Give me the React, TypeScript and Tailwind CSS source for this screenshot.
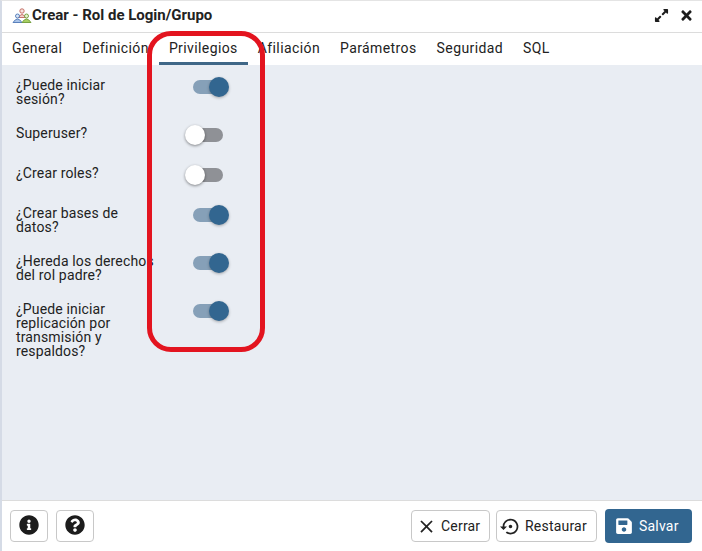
import { FaExpandAlt, FaTimes, FaInfoCircle, FaQuestionCircle, FaSave } from "react-icons/fa";
import { MdClose, MdSettingsBackupRestore } from "react-icons/md";

const tabs = ["General", "Definición", "Privilegios", "Afiliación", "Parámetros", "Seguridad", "SQL"];

const rows = [
  { label: "¿Puede iniciar sesión?", on: true },
  { label: "Superuser?", on: false },
  { label: "¿Crear roles?", on: false },
  { label: "¿Crear bases de datos?", on: true },
  { label: "¿Hereda los derechos del rol padre?", on: true },
  { label: "¿Puede iniciar replicación por transmisión y respaldos?", on: true },
];

const Toggle = ({ on }: { on: boolean }) => (
  <div className={`relative mt-[3px] h-[14px] w-[30px] rounded-full ${on ? "bg-[#86a0b8]" : "bg-[#8f9196]"}`}>
    {on ? (
      <div className="absolute right-[-6px] top-[-3px] h-5 w-5 rounded-full bg-[#326690] shadow-[0_1px_3px_rgba(0,0,0,0.3)]" />
    ) : (
      <div className="absolute left-[-8px] top-[-3px] h-5 w-5 rounded-full bg-white shadow-[0_1px_3px_rgba(0,0,0,0.45)]" />
    )}
  </div>
);

const Logo = () => (
  <svg width="20" height="16" viewBox="0 0 20 16">
    <circle cx="10" cy="3" r="2.2" fill="#f6e3df" stroke="#c0645a" strokeWidth="0.9" />
    <path d="M6.5 9.5 Q10 3.5 13.5 9.5 Z" fill="#f3d2cc" stroke="#c0645a" strokeWidth="0.9" />
    <circle cx="5.5" cy="8" r="2" fill="#dbe6f5" stroke="#4c76b5" strokeWidth="0.9" />
    <path d="M1 14.5 Q5.5 7.5 10 14.5 Z" fill="#a9c3e8" stroke="#4c76b5" strokeWidth="0.9" />
    <circle cx="14.5" cy="8" r="2" fill="#e6f2cf" stroke="#6d9a35" strokeWidth="0.9" />
    <path d="M10 14.5 Q14.5 7.5 19 14.5 Z" fill="#a8cf62" stroke="#6d9a35" strokeWidth="0.9" />
  </svg>
);

const App = () => {
  return (
    <div className="relative flex h-[551px] w-[702px] flex-col overflow-hidden border-l-2 border-t border-l-[#d5dbe6] border-t-[#e4e4e4] bg-white font-['Roboto',sans-serif] text-sm text-[#222222]">
      {/* Header */}
      <header className="flex h-8 shrink-0 items-center border-b border-[#dcdcdc] pb-[2px] pl-[10px] pr-[8px]">
        <Logo />
        <span className="text-[15px] font-bold">Crear - Rol de Login/Grupo</span>
        <div className="ml-auto flex items-center gap-[10px] text-[#1c1c1c]">
          <FaExpandAlt className="h-[15px] w-[15px]" />
          <FaTimes className="h-[15px] w-[15px]" />
        </div>
      </header>

      {/* Tabs */}
      <nav className="flex h-8 shrink-0 items-stretch bg-white">
        {tabs.map((tab) => (
          <div
            key={tab}
            className={`flex items-center border-b-[3px] px-[10px] tracking-[0.4px] ${
              tab === "Privilegios" ? "border-[#3f6787]" : "border-transparent"
            }`}
          >
            {tab}
          </div>
        ))}
      </nav>

      {/* Form */}
      <main className="flex flex-1 flex-col gap-5 bg-[#e9edf3] pl-[14px] pt-3">
        {rows.map((row) => (
          <div key={row.label} className="flex min-h-5">
            <div className="w-[177px] shrink-0">
              <p className="mb-[-1px] w-[140px] pt-px leading-[14px] tracking-[0.15px]">{row.label}</p>
            </div>
            <Toggle on={row.on} />
          </div>
        ))}
      </main>

      {/* Footer */}
      <footer className="flex h-[51px] shrink-0 items-center border-t border-[#dcdcdc] bg-white pl-2 pr-[10px]">
        <button className="flex h-8 w-[38px] items-center justify-center rounded border border-[#c8c8c8] pb-[2px]">
          <FaInfoCircle className="h-5 w-5 text-[#1c1c1c]" />
        </button>
        <button className="ml-2 flex h-8 w-[38px] items-center justify-center rounded border border-[#c8c8c8] pb-[2px]">
          <FaQuestionCircle className="h-5 w-5 text-[#1c1c1c]" />
        </button>
        <button className="ml-auto flex h-8 w-[79px] items-center gap-1 rounded border border-[#c8c8c8] pl-1 tracking-[0.2px]">
          <MdClose className="h-[21px] w-[21px]" />
          Cerrar
        </button>
        <button className="ml-[6px] flex h-8 w-[101px] items-center gap-1 rounded border border-[#c8c8c8] pl-[3px] tracking-[0.2px]">
          <MdSettingsBackupRestore className="h-[21px] w-[21px]" />
          Restaurar
        </button>
        <button className="ml-2 flex h-[34px] w-[87px] items-center gap-[6px] rounded bg-[#326690] pl-[10px] tracking-[0.2px] text-white">
          <FaSave className="h-[18px] w-[18px]" />
          Salvar
        </button>
      </footer>

      {/* Red annotation */}
      <div className="absolute left-[145px] top-[30px] h-[321px] w-[118px] rounded-[24px] border-[5px] border-[#e3141f]" />
    </div>
  );
};

export default App;
